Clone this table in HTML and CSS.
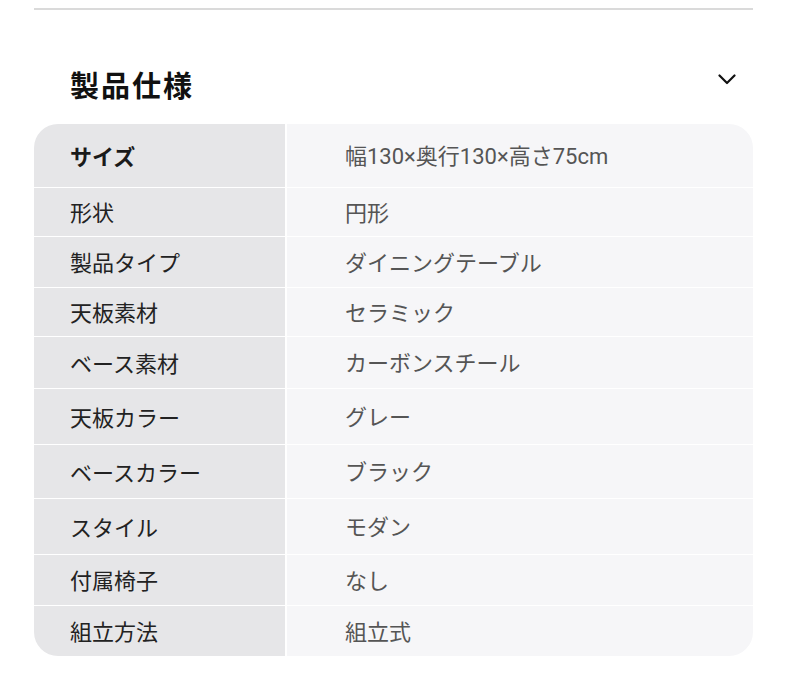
FILE: index.html
```html
<!DOCTYPE html>
<html lang="ja">
<head>
<meta charset="utf-8">
<link rel="stylesheet" href="styles.css">
</head>
<body>
<div class="page">
  <div class="rule"></div>
  <div class="head">
    <h2 class="title">製品仕様</h2>
    <svg class="chev" width="18" height="11" viewBox="0 0 18 11"><path d="M1.5 1.5 L9 9 L16.5 1.5" fill="none" stroke="#111" stroke-width="2.2" stroke-linecap="round" stroke-linejoin="round"/></svg>
  </div>
  <div class="spec">
    <div class="k strong">サイズ</div><div class="v">幅130×奥行130×高さ75cm</div>
    <div class="k">形状</div><div class="v">円形</div>
    <div class="k">製品タイプ</div><div class="v">ダイニングテーブル</div>
    <div class="k">天板素材</div><div class="v">セラミック</div>
    <div class="k">ベース素材</div><div class="v">カーボンスチール</div>
    <div class="k">天板カラー</div><div class="v">グレー</div>
    <div class="k">ベースカラー</div><div class="v">ブラック</div>
    <div class="k">スタイル</div><div class="v">モダン</div>
    <div class="k">付属椅子</div><div class="v">なし</div>
    <div class="k">組立方法</div><div class="v">組立式</div>
  </div>
</div>
</body>
</html>
```
FILE: styles.css
```css
* { box-sizing: border-box; }
html, body { margin: 0; padding: 0; background: #fff; }
body { font-family: "Noto Sans CJK JP", "Noto Sans", sans-serif; }
.page { padding: 8px 37px 0 34px; }
.rule { height: 2px; background: #dadada; }
.head {
  display: flex; align-items: center; justify-content: space-between;
  height: 114px; padding: 34px 17px 0 36px;
}
.title {
  margin: 0; font-size: 29px; font-weight: 700; letter-spacing: 2px;
  color: #111; line-height: 1;
}
.chev { position: relative; top: -5px; }
.spec {
  display: grid;
  grid-template-columns: 251px 1fr;
  grid-template-rows: 63px 48px 50px 48px 51px 55px 53px 55px 50px 50px;
  column-gap: 2px; row-gap: 1px;
  background: #fff;
  border-radius: 24px; overflow: hidden;
}
.k, .v { display: flex; align-items: center; font-size: 22px; line-height: 1; }
.k { background: #e6e6e8; color: #222; padding: 0 0 2px 36px; }
.v {
  background: #f6f6f8; color: #555; padding: 3px 0 0 58px;
  font-family: "Roboto", "Noto Sans CJK JP", sans-serif;
}
.k.strong { font-weight: 700; color: #1a1a1a; }
```
